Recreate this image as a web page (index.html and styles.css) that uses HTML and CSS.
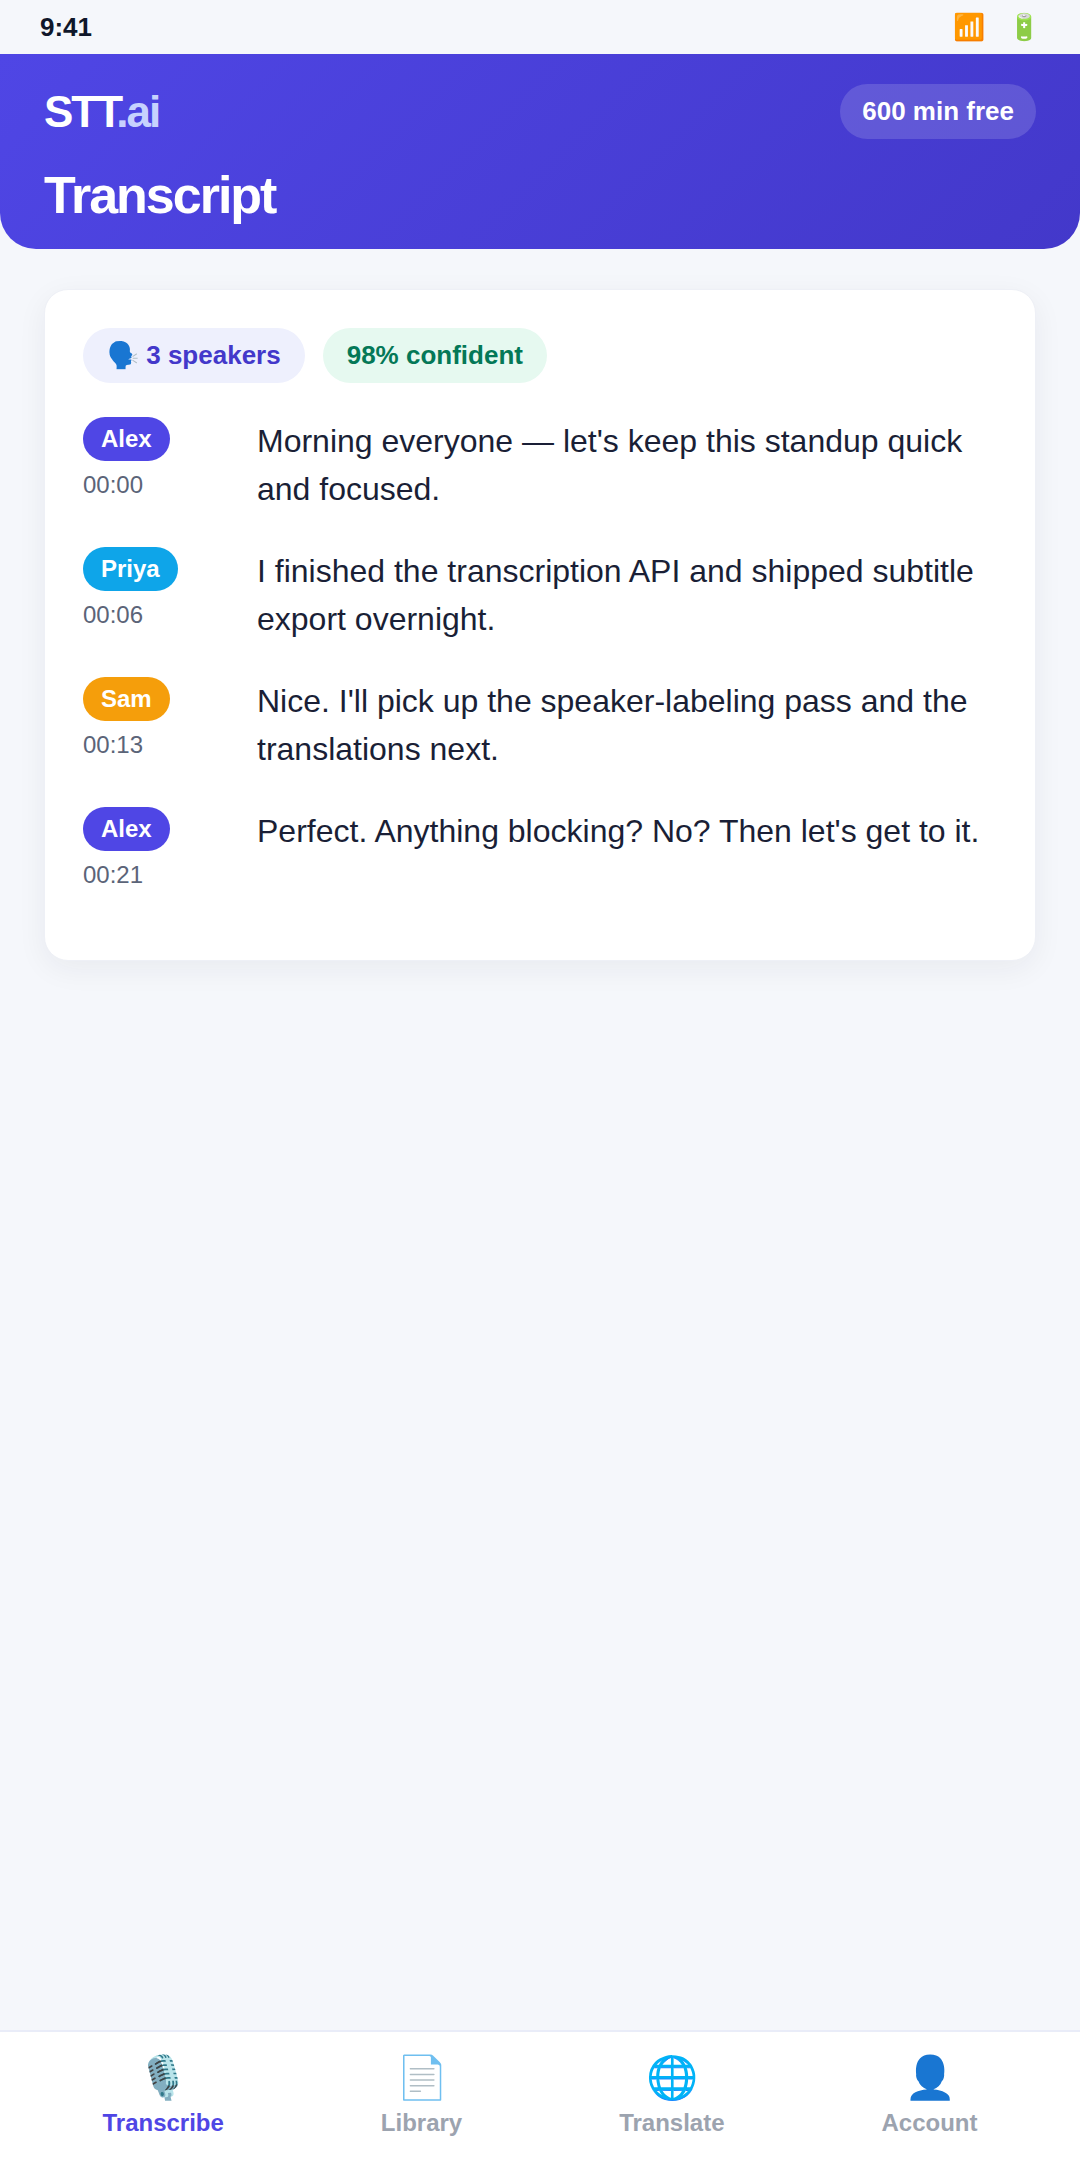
FILE: index.html
```html
<!doctype html>
<html>
    <head>
        <meta charset="utf-8">
        <title>STT.ai - Transcript</title>
        <meta name="viewport" content="width=device-width, initial-scale=1">
        <link rel="stylesheet" href="styles.css">
    </head>
    <body>
        <div class="status-bar">
            <span class="time">9:41</span>
            <span class="status-icons"><span>📶</span><span>🔋</span></span>
        </div>
        <header class="hero">
            <div class="hero-top">
                <div class="logo">STT<span>.ai</span></div>
                <div class="free-badge">600 min free</div>
            </div>
            <h1>Transcript</h1>
        </header>
        <main class="content">
            <section class="card">
                <div class="chips">
                    <span class="chip chip-speakers">🗣️ 3 speakers</span>
                    <span class="chip chip-confident">98% confident</span>
                </div>
                <div class="line">
                    <div class="who">
                        <span class="speaker alex">Alex</span>
                        <span class="stamp">00:00</span>
                    </div>
                    <p>Morning everyone — let's keep this standup quick and focused.</p>
                </div>
                <div class="line">
                    <div class="who">
                        <span class="speaker priya">Priya</span>
                        <span class="stamp">00:06</span>
                    </div>
                    <p>I finished the transcription API and shipped subtitle export overnight.</p>
                </div>
                <div class="line">
                    <div class="who">
                        <span class="speaker sam">Sam</span>
                        <span class="stamp">00:13</span>
                    </div>
                    <p>Nice. I'll pick up the speaker-labeling pass and the translations next.</p>
                </div>
                <div class="line">
                    <div class="who">
                        <span class="speaker alex">Alex</span>
                        <span class="stamp">00:21</span>
                    </div>
                    <p>Perfect. Anything blocking? No? Then let's get to it.</p>
                </div>
            </section>
        </main>
        <nav class="tabs">
            <div class="tab active"><span class="tab-icon">🎙️</span>Transcribe</div>
            <div class="tab"><span class="tab-icon">📄</span>Library</div>
            <div class="tab"><span class="tab-icon">🌐</span>Translate</div>
            <div class="tab"><span class="tab-icon">👤</span>Account</div>
        </nav>
    </body>
</html>
```

FILE: styles.css
```css
html,
body {
    margin: 0;
    height: 100%;
}

body {
    display: flex;
    flex-direction: column;
    height: 2160px;
    background: #f5f7fb;
    color: #1a1f36;
    font-family: "Liberation Sans", Arial, sans-serif;
}

.status-bar {
    display: flex;
    justify-content: space-between;
    align-items: center;
    height: 54px;
    padding: 0 40px;
    box-sizing: border-box;
}
.time {
    font-size: 26px;
    font-weight: 700;
    color: #0f172a;
}
.status-icons {
    display: flex;
    gap: 23px;
    font-size: 26px;
}

.hero {
    height: 195px;
    box-sizing: border-box;
    padding: 30px 44px 0;
    background: linear-gradient(135deg, #4f46e5, #4338ca);
    border-radius: 0 0 36px 36px;
    color: #fff;
}
.hero-top {
    display: flex;
    justify-content: space-between;
    align-items: center;
}
.logo {
    font-size: 44px;
    font-weight: 700;
    letter-spacing: -2px;
}
.logo span {
    color: #c7d2fe;
}
.free-badge {
    padding: 12px 22px;
    height: 31px;
    line-height: 31px;
    border-radius: 28px;
    background: rgba(255, 255, 255, 0.15);
    font-size: 26px;
    font-weight: 700;
}
.hero h1 {
    margin: 26px 0 0;
    font-size: 52px;
    line-height: 60px;
    letter-spacing: -2px;
}

.content {
    flex: 1;
    padding: 40px 44px;
}
.card {
    height: 672px;
    box-sizing: border-box;
    padding: 38px;
    background: #fff;
    border: 1px solid #eef0f6;
    border-radius: 24px;
    box-shadow: 0 8px 30px rgba(26, 31, 54, 0.06);
}
.chips {
    display: flex;
    gap: 18px;
    margin-bottom: 34px;
}
.chip {
    padding: 0 24px;
    height: 55px;
    line-height: 55px;
    border-radius: 28px;
    font-size: 26px;
    font-weight: 700;
}
.chip-speakers {
    background: #eef0fd;
    color: #4338ca;
}
.chip-confident {
    background: #e6f9f0;
    color: #047857;
}

.line {
    display: flex;
    margin-bottom: 34px;
}
.who {
    flex: 0 0 174px;
}
.speaker {
    display: inline-block;
    padding: 0 18px;
    height: 44px;
    line-height: 44px;
    border-radius: 22px;
    color: #fff;
    font-size: 24px;
    font-weight: 700;
}
.alex {
    background: #4f46e5;
}
.priya {
    background: #0ea5e9;
}
.sam {
    background: #f59e0b;
}
.stamp {
    display: block;
    margin-top: 10px;
    color: #5b6478;
    font-size: 24px;
}
.line p {
    margin: 0;
    font-size: 32px;
    line-height: 48px;
}

.tabs {
    display: flex;
    justify-content: space-around;
    height: 130px;
    box-sizing: border-box;
    padding: 22px 24px 0;
    background: #fff;
    border-top: 2px solid #e9ecf8;
}
.tab {
    display: flex;
    flex-direction: column;
    align-items: center;
    color: #9ca3af;
    font-size: 24px;
    font-weight: 700;
}
.tab-icon {
    font-size: 42px;
    line-height: 48px;
    margin-bottom: 7px;
}
.tab.active {
    color: #4f46e5;
}
```
